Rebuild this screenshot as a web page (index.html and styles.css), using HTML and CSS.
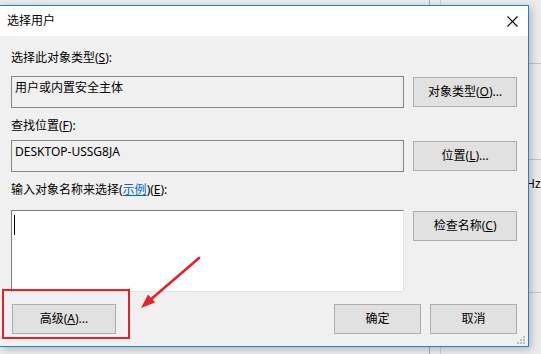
FILE: index.html
```html
<!DOCTYPE html>
<html lang="zh-CN">
<head>
  <meta charset="UTF-8">
  <title>选择用户</title>
  <link rel="stylesheet" href="styles.css">
</head>
<body>
  <div class="backdrop">
    <div class="vline v1"></div>
    <div class="vline v2"></div>
    <div class="hline h1"></div>
    <div class="hline h2"></div>
    <div class="hline h3"></div>
    <div class="hz">Hz</div>
  </div>

  <div class="window">
    <div class="titlebar">
      <span class="title">选择用户</span>
      <svg class="close" width="11" height="11" viewBox="0 0 11 11">
        <path d="M0.5 0.5 L10.5 10.5 M10.5 0.5 L0.5 10.5" stroke="#000" stroke-width="1.1" fill="none"/>
      </svg>
    </div>

    <div class="content">
      <div class="label">选择此对象类型(<u>S</u>):</div>
      <div class="row">
        <div class="field">用户或内置安全主体</div>
        <button class="btn side">对象类型(<u>O</u>)...</button>
      </div>

      <div class="label gap-s">查找位置(<u>F</u>):</div>
      <div class="row row-tight">
        <div class="field">DESKTOP-USSG8JA</div>
        <button class="btn side">位置(<u>L</u>)...</button>
      </div>

      <div class="label">输入对象名称来选择(<a class="link" href="#">示例</a>)(<u>E</u>):</div>
      <div class="row row-wide">
        <div class="editbox"><span class="caret"></span></div>
        <button class="btn side">检查名称(<u>C</u>)</button>
      </div>

      <div class="footer">
        <button class="btn wide">高级(<u>A</u>)...</button>
        <button class="btn small push">确定</button>
        <button class="btn small">取消</button>
      </div>
    </div>

    <svg class="grip" width="8" height="8" viewBox="0 0 8 8">
      <rect x="6" y="0" width="2" height="2" fill="#bdbdbd"/>
      <rect x="3" y="3" width="2" height="2" fill="#bdbdbd"/>
      <rect x="6" y="3" width="2" height="2" fill="#bdbdbd"/>
      <rect x="0" y="6" width="2" height="2" fill="#bdbdbd"/>
      <rect x="3" y="6" width="2" height="2" fill="#bdbdbd"/>
      <rect x="6" y="6" width="2" height="2" fill="#bdbdbd"/>
    </svg>
  </div>

  <div class="mark"></div>
  <svg class="arrow" width="541" height="354" viewBox="0 0 541 354">
    <line x1="199" y1="258" x2="149" y2="301" stroke="#e8222a" stroke-width="2.6" stroke-linecap="round"/>
    <polygon points="141,308 155,302.5 148,294.5" fill="#e8222a"/>
  </svg>
</body>
</html>
```

FILE: styles.css
```css
body {
  margin: 0;
  width: 541px;
  height: 354px;
  overflow: hidden;
  position: relative;
  background: #ececec;
  font-family: "Noto Sans", "Noto Sans CJK SC", sans-serif;
  font-size: 12px;
  color: #000;
}
.backdrop {
  position: absolute;
  top: 0;
  left: 0;
  width: 541px;
  height: 354px;
}
.vline {
  position: absolute;
  top: 0;
  width: 1px;
  height: 354px;
  background: #a9a9a9;
}
.v1 { left: 429px; }
.v2 { left: 440px; background: #cfcfcf; }
.hline {
  position: absolute;
  left: 529px;
  width: 12px;
  height: 1px;
  background: #c6c6c6;
}
.h1 { top: 63px; }
.h2 { top: 159px; }
.h3 { top: 292px; }
.hz {
  position: absolute;
  left: 526px;
  top: 176px;
  line-height: 16px;
}
.window {
  position: relative;
  margin-top: 5px;
  width: 529px;
  height: 342px;
  box-sizing: border-box;
  border-top: 1px solid #1a84d8;
  border-right: 1px solid #1a84d8;
  border-bottom: 1px solid #1a84d8;
  background: #f0f0f0;
  box-shadow: 2px 2px 8px rgba(0, 0, 0, 0.25);
}
.titlebar {
  height: 30px;
  background: #fff;
  display: flex;
  align-items: center;
  justify-content: space-between;
  padding: 0 10px 0 7px;
}
.title {
  line-height: 16px;
}
.close {
  margin-top: 0;
}
.content {
  padding: 14px 11px 12px 11px;
  display: flex;
  flex-direction: column;
}
.label {
  height: 16px;
  line-height: 16px;
  margin-bottom: 10px;
}
.label.gap-s {
  margin-bottom: 6px;
}
.row {
  display: flex;
  gap: 9px;
  align-items: flex-start;
  margin-bottom: 10px;
}
.row-tight {
  margin-bottom: 10px;
}
.row-wide {
  margin-top: 2px;
  margin-bottom: 12px;
}
.field {
  width: 394px;
  height: 32px;
  box-sizing: border-box;
  border: 1px solid #848484;
  padding: 3px 3px;
  line-height: 16px;
  white-space: nowrap;
}
.editbox {
  width: 394px;
  height: 82px;
  box-sizing: border-box;
  background: #fff;
  border-top: 1px solid #7e7e7e;
  border-left: 1px solid #7e7e7e;
  border-right: 1px solid #e3e3e3;
  border-bottom: 1px solid #e3e3e3;
  padding: 4px 2px;
}
.caret {
  display: block;
  width: 1px;
  height: 20px;
  background: #000;
}
.btn {
  font-family: inherit;
  font-size: 12px;
  color: #000;
  height: 30px;
  padding: 0;
  background: #e1e1e1;
  border: 1px solid #adadad;
  box-sizing: border-box;
  line-height: 16px;
}
.side {
  width: 104px;
  margin-top: 1px;
}
.footer {
  display: flex;
  gap: 9px;
}
.wide {
  width: 104px;
  margin-left: 1px;
}
.small {
  width: 87px;
}
.push {
  margin-left: auto;
}
.link {
  color: #0066cc;
  text-decoration: underline;
}
.grip {
  position: absolute;
  right: 3px;
  bottom: 2px;
}
.mark {
  position: absolute;
  left: 2px;
  top: 289px;
  width: 128px;
  height: 50px;
  box-sizing: border-box;
  border: 2px solid #e5222b;
}
.arrow {
  position: absolute;
  top: 0;
  left: 0;
  pointer-events: none;
}
```
